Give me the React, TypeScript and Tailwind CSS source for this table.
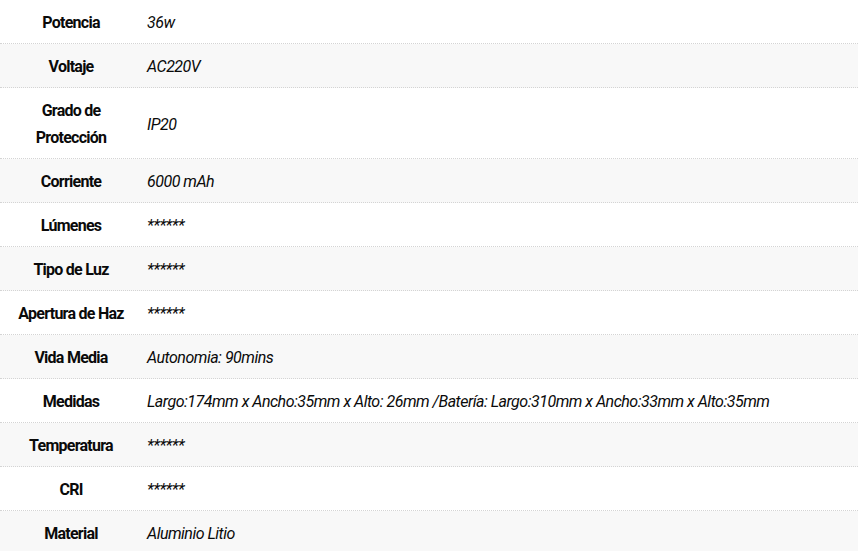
const rows: [string, string][] = [
  ['Potencia', '36w'],
  ['Voltaje', 'AC220V'],
  ['Grado de Protección', 'IP20'],
  ['Corriente', '6000 mAh'],
  ['Lúmenes', '******'],
  ['Tipo de Luz', '******'],
  ['Apertura de Haz', '******'],
  ['Vida Media', 'Autonomia: 90mins'],
  ['Medidas', 'Largo:174mm x Ancho:35mm x Alto: 26mm /Batería: Largo:310mm x Ancho:33mm x Alto:35mm'],
  ['Temperatura', '******'],
  ['CRI', '******'],
  ['Material', 'Aluminio Litio'],
];

export default function App() {
  return (
    <div className="w-[858px] bg-white text-[16px] leading-[27px] text-[#0a0a0a] font-['Roboto',sans-serif]">
      {rows.map(([label, value], i) => (
        <div key={label} className={`flex border-b border-dotted border-[#d4d4d4] ${i % 2 === 1 ? 'bg-[#f8f8f8]' : 'bg-white'}`}>
          <div className="w-[142px] shrink-0 px-2 pt-[9px] pb-[7px] text-center font-bold tracking-[-0.75px]">{label}</div>
          <div className="flex items-center pt-[9px] pb-[7px] pl-[5px] italic tracking-[-0.5px]">{value}</div>
        </div>
      ))}
    </div>
  );
}
